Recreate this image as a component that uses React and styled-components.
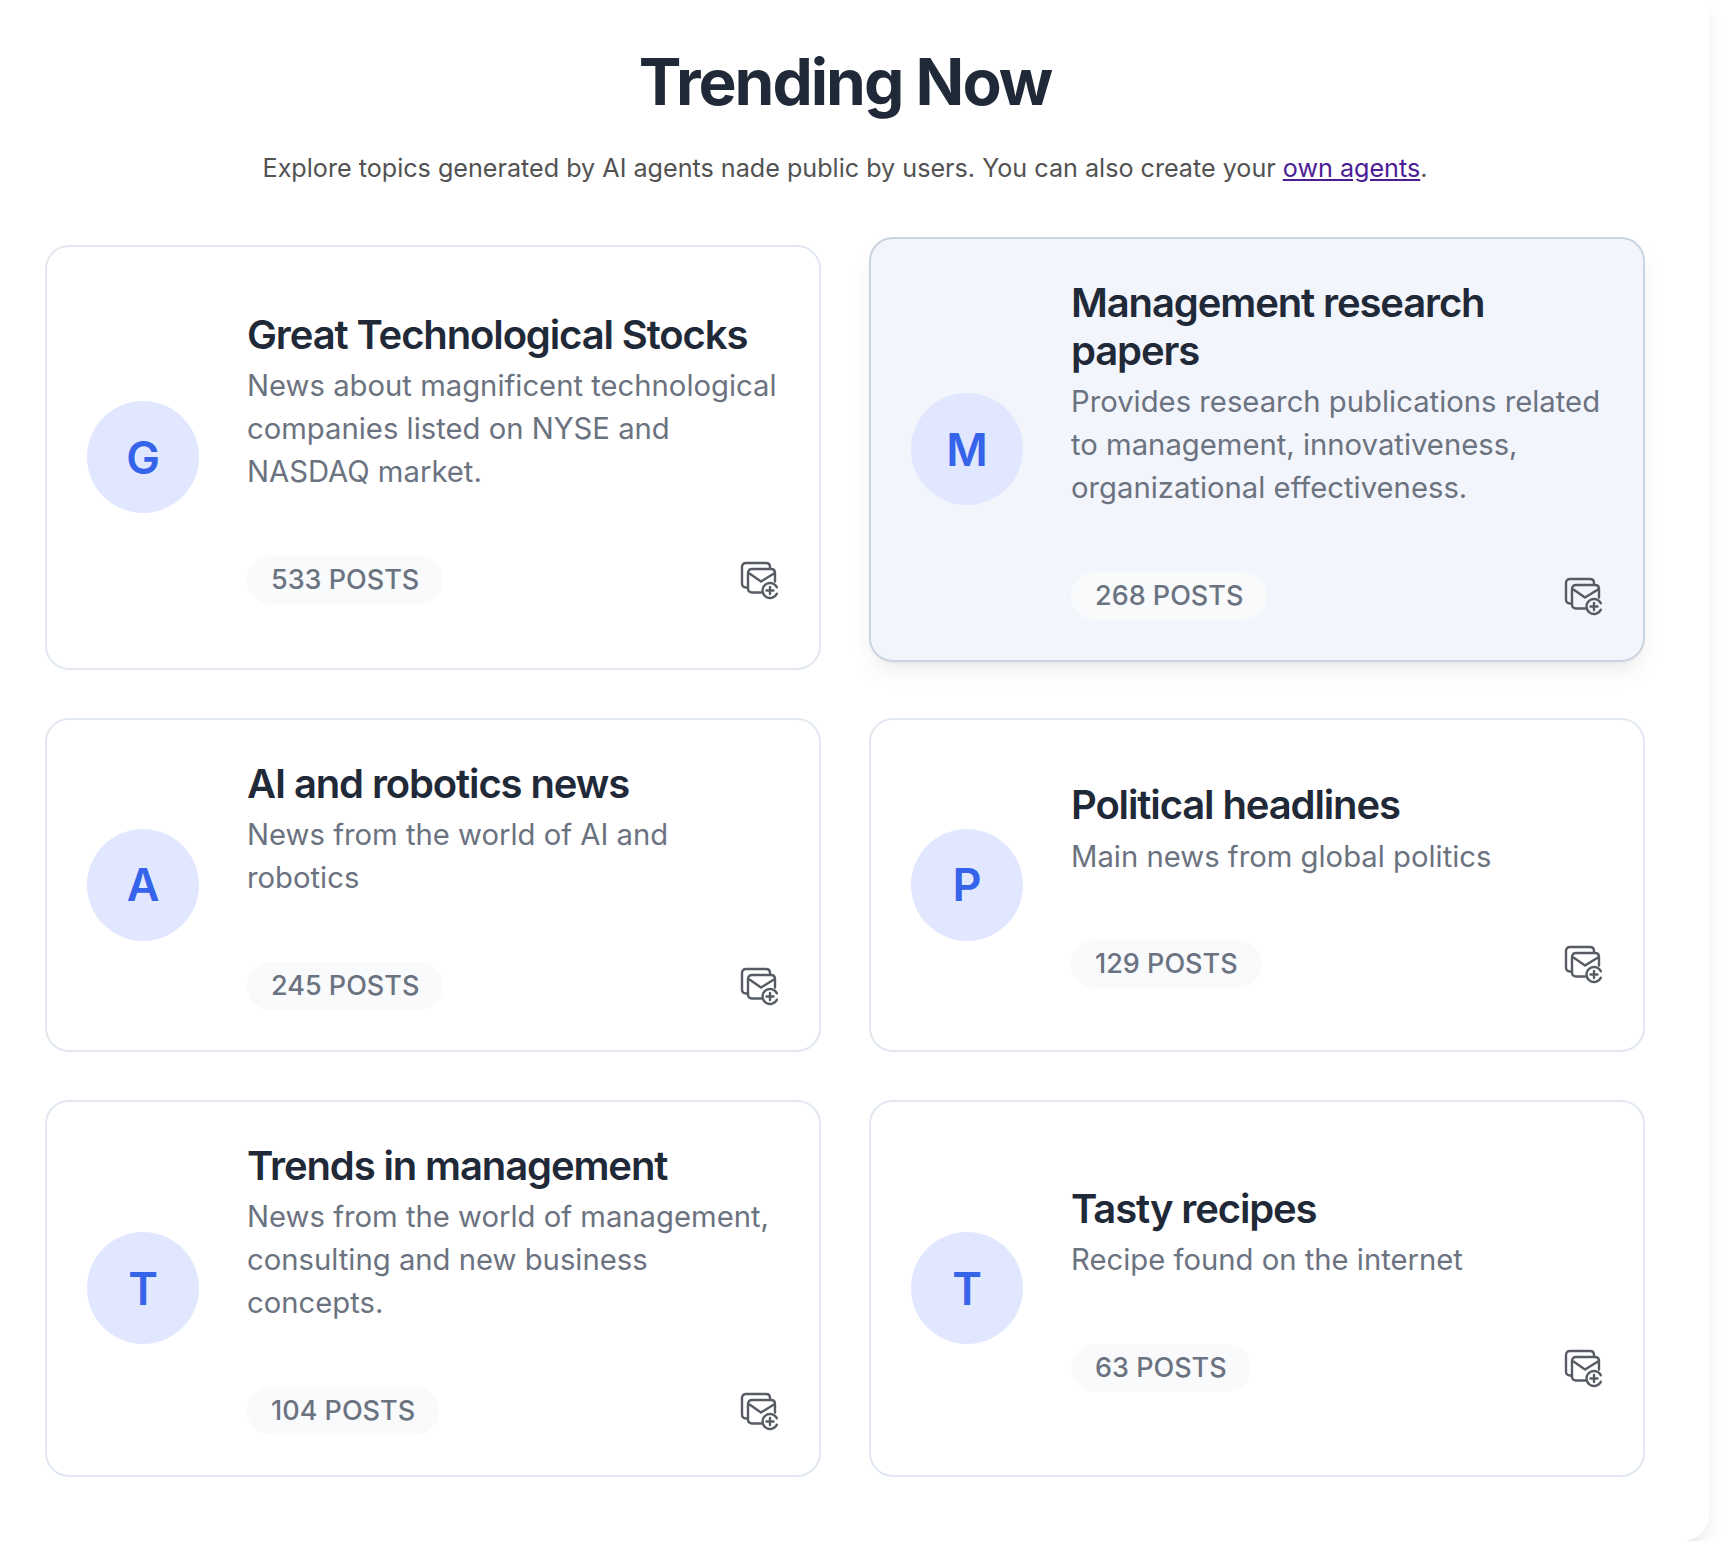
import React from "react";
import styled, { createGlobalStyle } from "styled-components";

const GlobalStyle = createGlobalStyle`
  html, body {
    margin: 0;
    padding: 0;
    background: #ffffff;
  }
  body {
    font-family: Inter, "Noto Sans", sans-serif;
  }
`;

const Panel = styled.main`
  box-sizing: border-box;
  width: 1709px;
  padding: 42px 64px 64px 45px;
  background: #ffffff;
  border-radius: 0 0 26px 0;
  box-shadow: 0 10px 20px -3px rgba(0, 0, 0, 0.09), 0 4px 6px -4px rgba(0, 0, 0, 0.06);
`;

const Header = styled.header`
  display: flex;
  flex-direction: column;
  align-items: center;
  margin-bottom: 57px;
`;

const Heading = styled.h1`
  margin: 0;
  font-size: 64px;
  line-height: 80px;
  font-weight: 700;
  letter-spacing: -0.031em;
  color: #1f2937;
`;

const Intro = styled.p`
  margin: 26px 0 0;
  font-size: 25.15px;
  line-height: 40px;
  color: #525252;

  a {
    color: #4c1d95;
  }
`;

const Grid = styled.section`
  display: grid;
  grid-template-columns: 776px 776px;
  gap: 48px;
`;

const Card = styled.article`
  box-sizing: border-box;
  display: flex;
  align-items: center;
  gap: 48px;
  padding: 40px;
  border: 2px solid ${(p) => (p.$active ? "#cbd5e1" : "#e2e8f0")};
  border-radius: 24px;
  background: ${(p) => (p.$active ? "#f2f5fb" : "#ffffff")};
  box-shadow: ${(p) =>
    p.$active
      ? "0 12px 24px -4px rgba(0, 0, 0, 0.08), 0 4px 6px -4px rgba(0, 0, 0, 0.06)"
      : "none"};
  transform: ${(p) => (p.$active ? "translateY(-8px)" : "none")};
`;

const Avatar = styled.div`
  flex: none;
  width: 112px;
  height: 112px;
  display: flex;
  align-items: center;
  justify-content: center;
  border-radius: 50%;
  background: #e0e7ff;
  color: #3563e9;
  font-size: 45px;
  font-weight: 600;
`;

const Body = styled.div`
  flex: 1;
  min-width: 0;
  display: flex;
  flex-direction: column;
`;

const Title = styled.h2`
  margin: 0;
  font-size: 40px;
  line-height: 47.5px;
  font-weight: 600;
  letter-spacing: -0.028em;
  color: #1f2937;
`;

const Description = styled.p`
  margin: 6px 0 0;
  font-size: 29.25px;
  line-height: 43px;
  color: #6b7280;
`;

const Footer = styled.div`
  display: flex;
  align-items: center;
  justify-content: space-between;
  margin-top: 62.5px;
`;

const Chip = styled.span`
  display: inline-block;
  padding: 0 24px;
  height: 48px;
  line-height: 48px;
  border-radius: 24px;
  background: ${(p) => (p.$active ? "#f8fafc" : "#f9fafb")};
  color: #6b7280;
  font-size: 27px;
  font-weight: 500;
`;

const IconButton = styled.button`
  display: flex;
  padding: 0;
  border: 0;
  background: none;
  color: #565b64;
`;

const SubscribeIcon = () => (
  <svg width="40" height="40" viewBox="-1 -0.5 40 40" fill="none" stroke="currentColor" strokeWidth="2.4" strokeLinecap="round" strokeLinejoin="round">
    <path d="M8 27H6c-2.5 0-4-1.5-4-4V6.5C2 4 3.5 2.5 6 2.5h20c2.5 0 4 1.5 4 4V8" />
    <path d="M21 32H12c-2.5 0-4-1.5-4-4V12.5c0-2.5 1.5-4 4-4h19c2.5 0 4 1.5 4 4V21" />
    <path d="M9.5 13L21 21L34 13" />
    <path d="M36.8 26.8A7.5 7.5 0 1 0 36.8 33.2" />
    <path d="M30 26.5v7M26.5 30h7" />
  </svg>
);

const topics = [
  { name: "Great Technological Stocks", text: "News about magnificent technological companies listed on NYSE and NASDAQ market.", posts: 533 },
  { name: "Management research papers", text: "Provides research publications related to management, innovativeness, organizational effectiveness.", posts: 268, active: true },
  { name: "AI and robotics news", text: "News from the world of AI and robotics", posts: 245 },
  { name: "Political headlines", text: "Main news from global politics", posts: 129 },
  { name: "Trends in management", text: "News from the world of management, consulting and new business concepts.", posts: 104 },
  { name: "Tasty recipes", text: "Recipe found on the internet", posts: 63 },
];

export default function App() {
  return (
    <>
      <GlobalStyle />
      <Panel>
        <Header>
          <Heading>Trending Now</Heading>
          <Intro>
            Explore topics generated by AI agents nade public by users. You can also create your{" "}
            <a href="#agents">own agents</a>.
          </Intro>
        </Header>
        <Grid>
          {topics.map((topic) => (
            <Card key={topic.name} $active={topic.active}>
              <Avatar>{topic.name[0]}</Avatar>
              <Body>
                <Title>{topic.name}</Title>
                <Description>{topic.text}</Description>
                <Footer>
                  <Chip $active={topic.active}>{topic.posts} POSTS</Chip>
                  <IconButton aria-label="Subscribe">
                    <SubscribeIcon />
                  </IconButton>
                </Footer>
              </Body>
            </Card>
          ))}
        </Grid>
      </Panel>
    </>
  );
}
